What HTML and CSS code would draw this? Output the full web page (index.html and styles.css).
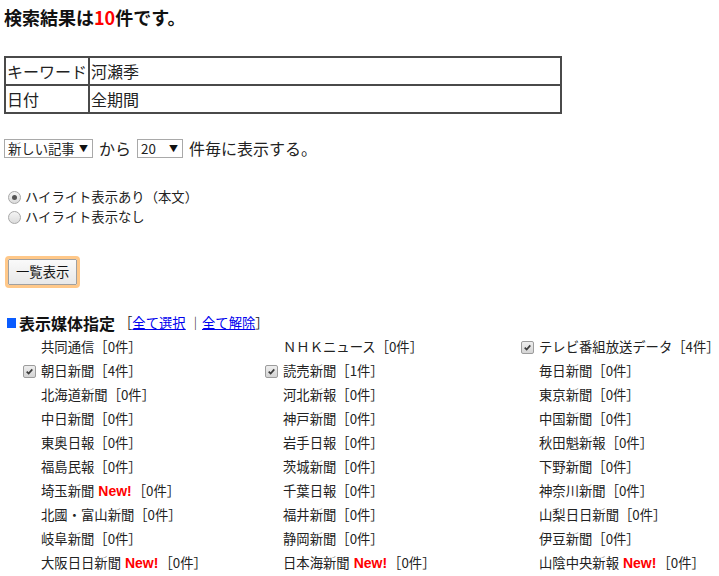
FILE: index.html
```html
<!DOCTYPE html>
<html lang="ja">
<head>
    <meta charset="UTF-8">
    <title>検索結果</title>
    <link rel="stylesheet" href="styles.css">
</head>
<body>

    <h1 class="result">検索結果は<span class="count">10</span>件です。</h1>

    <!-- 検索条件 -->
    <table class="cond">
        <tr><th>キーワード</th><td>河瀬季</td></tr>
        <tr><th>日付</th><td>全期間</td></tr>
    </table>

    <!-- 並び順と件数 -->
    <div class="sort-row">
        <span class="select sel-order">新しい記事<span class="arrow">▼</span></span>
        <span class="word">から</span>
        <span class="select sel-num">20<span class="arrow">▼</span></span>
        <span class="word">件毎に表示する。</span>
    </div>

    <ul class="highlight">
        <li><span class="radio on"></span>ハイライト表示あり（本文）</li>
        <li><span class="radio"></span>ハイライト表示なし</li>
    </ul>

    <div class="actions">
        <button class="btn-list" type="button">一覧表示</button>
    </div>

    <!-- 媒体一覧 -->
    <div class="media-head">
        <span class="mark"></span>
        <span class="media-title">表示媒体指定</span>
        <span class="links">［<a href="#">全て選択</a> ｜<a href="#">全て解除</a>］</span>
    </div>

    <div class="media-grid">
        <div class="item"><span class="cb off"></span>共同通信［0件］</div>
        <div class="item"><span class="cb off"></span>ＮＨＫニュース［0件］</div>
        <div class="item"><span class="cb"><svg viewBox="0 0 13 13"><path d="M3.2 6.6l2.3 2.4 4.3-5" /></svg></span>テレビ番組放送データ［4件］</div>

        <div class="item"><span class="cb"><svg viewBox="0 0 13 13"><path d="M3.2 6.6l2.3 2.4 4.3-5" /></svg></span>朝日新聞［4件］</div>
        <div class="item"><span class="cb"><svg viewBox="0 0 13 13"><path d="M3.2 6.6l2.3 2.4 4.3-5" /></svg></span>読売新聞［1件］</div>
        <div class="item"><span class="cb off"></span>毎日新聞［0件］</div>

        <div class="item"><span class="cb off"></span>北海道新聞［0件］</div>
        <div class="item"><span class="cb off"></span>河北新報［0件］</div>
        <div class="item"><span class="cb off"></span>東京新聞［0件］</div>

        <div class="item"><span class="cb off"></span>中日新聞［0件］</div>
        <div class="item"><span class="cb off"></span>神戸新聞［0件］</div>
        <div class="item"><span class="cb off"></span>中国新聞［0件］</div>

        <div class="item"><span class="cb off"></span>東奥日報［0件］</div>
        <div class="item"><span class="cb off"></span>岩手日報［0件］</div>
        <div class="item"><span class="cb off"></span>秋田魁新報［0件］</div>

        <div class="item"><span class="cb off"></span>福島民報［0件］</div>
        <div class="item"><span class="cb off"></span>茨城新聞［0件］</div>
        <div class="item"><span class="cb off"></span>下野新聞［0件］</div>

        <div class="item"><span class="cb off"></span>埼玉新聞 <span class="new">New!</span>［0件］</div>
        <div class="item"><span class="cb off"></span>千葉日報［0件］</div>
        <div class="item"><span class="cb off"></span>神奈川新聞［0件］</div>

        <div class="item"><span class="cb off"></span>北國・富山新聞［0件］</div>
        <div class="item"><span class="cb off"></span>福井新聞［0件］</div>
        <div class="item"><span class="cb off"></span>山梨日日新聞［0件］</div>

        <div class="item"><span class="cb off"></span>岐阜新聞［0件］</div>
        <div class="item"><span class="cb off"></span>静岡新聞［0件］</div>
        <div class="item"><span class="cb off"></span>伊豆新聞［0件］</div>

        <div class="item"><span class="cb off"></span>大阪日日新聞 <span class="new">New!</span>［0件］</div>
        <div class="item"><span class="cb off"></span>日本海新聞 <span class="new">New!</span>［0件］</div>
        <div class="item"><span class="cb off"></span>山陰中央新報 <span class="new">New!</span>［0件］</div>
    </div>

</body>
</html>
```

FILE: styles.css
```css
/* Base */
* {
    margin: 0;
    padding: 0;
    box-sizing: border-box;
}

body {
    font-family: "Noto Sans CJK JP", "Noto Sans", sans-serif;
    font-size: 13.33px;
    line-height: 20px;
    color: #222;
    background: #fff;
    padding: 5px 4px 0;
}

/* Heading */
.result {
    font-size: 18px;
    font-weight: bold;
    line-height: 24px;
    color: #111;
}

.result .count {
    color: #f00;
}

/* Condition table */
.cond {
    margin-top: 27px;
    width: 558px;
    border-collapse: collapse;
    font-size: 16px;
    line-height: 24px;
}

.cond th,
.cond td {
    border: 2px solid #4a4a4a;
    height: 28px;
    padding: 0 1px;
    text-align: left;
    font-weight: normal;
    vertical-align: middle;
}

.cond th {
    width: 84px;
    white-space: nowrap;
}

/* Sort row */
.sort-row {
    margin-top: 22px;
    display: flex;
    align-items: center;
    height: 24px;
    font-size: 16px;
}

.select {
    display: inline-flex;
    align-items: center;
    justify-content: space-between;
    height: 19px;
    border: 1px solid #a9a9a9;
    background: #fff;
    font-size: 13.33px;
    padding: 0 4px 0 3px;
    line-height: 17px;
}

.sel-order {
    width: 89px;
}

.sel-num {
    width: 46px;
}

.arrow {
    font-size: 9px;
    color: #111;
}

.word {
    margin: 0 6px;
}

/* Highlight radios */
.highlight {
    list-style: none;
    margin-top: 27px;
}

.highlight li {
    display: flex;
    align-items: center;
    height: 20px;
}

.radio {
    width: 13px;
    height: 13px;
    margin: 0 4px 0 4px;
    border: 1px solid #a8a8a8;
    border-radius: 50%;
    background: linear-gradient(#f4f4f4, #dcdcdc);
    display: inline-flex;
    align-items: center;
    justify-content: center;
}

.radio.on::after {
    content: "";
    width: 5px;
    height: 5px;
    border-radius: 50%;
    background: #555;
}

/* Button */
.actions {
    margin-top: 32px;
    padding-left: 4px;
}

.btn-list {
    font-family: inherit;
    font-size: 13.33px;
    line-height: 18px;
    height: 26px;
    padding: 0 7px;
    border: 1px solid #a0a0a0;
    border-radius: 1px;
    background: linear-gradient(#fafafa, #e8e8e8);
    color: #111;
    outline: 3px solid #ffc889;
    cursor: pointer;
}

/* Media section */
.media-head {
    margin-top: 28px;
    display: flex;
    align-items: center;
    height: 20px;
}

.mark {
    width: 9px;
    height: 10px;
    background: #0a5cff;
    margin: 0 3px 0 3px;
}

.media-title {
    font-size: 16px;
    font-weight: bold;
    color: #111;
    margin-right: 4px;
}

.links a {
    color: #00e;
}

.media-grid {
    margin-top: 2px;
    padding-left: 19px;
    display: grid;
    grid-template-columns: 242px 256px auto;
    grid-auto-rows: 24px;
}

.item {
    display: flex;
    align-items: center;
    white-space: nowrap;
}

.cb {
    width: 13px;
    height: 13px;
    margin-right: 5px;
    border: 1px solid #9c9c9c;
    border-radius: 2px;
    background: linear-gradient(#eeeeee, #d4d4d4);
    display: inline-flex;
}

.cb svg {
    width: 11px;
    height: 11px;
}

.cb path {
    fill: none;
    stroke: #3c3c3c;
    stroke-width: 2;
}

.cb.off {
    visibility: hidden;
}

.new {
    font-family: "Liberation Sans", Arial, sans-serif;
    font-size: 14px;
    font-weight: bold;
    color: #f00;
    margin: 0 1px 0 4px;
}
```
